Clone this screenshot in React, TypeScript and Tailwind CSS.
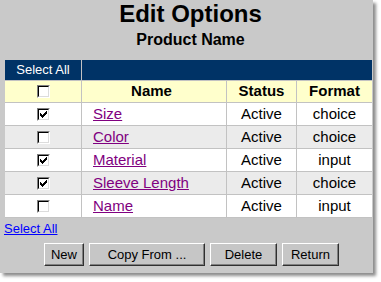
import React from "react";

type Row = { name: string; checked: boolean; status: string; format: string };

const rows: Row[] = [
  { name: "Size", checked: true, status: "Active", format: "choice" },
  { name: "Color", checked: false, status: "Active", format: "choice" },
  { name: "Material", checked: true, status: "Active", format: "input" },
  { name: "Sleeve Length", checked: true, status: "Active", format: "choice" },
  { name: "Name", checked: false, status: "Active", format: "input" },
];

// classic 7x7 check glyph, one rect per pixel run
const checkPixels: [number, number, number][] = [
  [6, 0, 1],
  [5, 1, 2],
  [0, 2, 1],
  [4, 2, 3],
  [0, 3, 2],
  [3, 3, 3],
  [0, 4, 5],
  [1, 5, 3],
  [2, 6, 1],
];

function Checkbox({ checked }: { checked: boolean }) {
  return (
    <span className="inline-block h-[13px] w-[13px] border-l border-t border-b border-r border-l-[#808080] border-t-[#808080] border-r-white border-b-white">
      <span className="flex h-[11px] w-[11px] items-center justify-center border border-l-black border-t-black border-r-[#dcdcdc] border-b-[#dcdcdc] bg-white">
        {checked && (
          <svg width="7" height="7" viewBox="0 0 7 7" shapeRendering="crispEdges">
            {checkPixels.map(([x, y, w], i) => (
              <rect key={i} x={x} y={y} width={w} height={1} fill="#000" />
            ))}
          </svg>
        )}
      </span>
    </span>
  );
}

function Button({ label, width }: { label: string; width: string }) {
  return (
    <button
      className={`h-[23px] ${width} border border-l-white border-t-white border-r-[#303030] border-b-[#303030] bg-[#c6c6c6] text-[13px] leading-none text-black shadow-[inset_-1px_-1px_0_#808080]`}
    >
      {label}
    </button>
  );
}

export default function App() {
  return (
    <div className="h-[282px] w-[381px] bg-white font-['Liberation_Sans',Arial,sans-serif] text-black">
      <div className="flex h-[273px] w-[373px] flex-col bg-[#c9c9c9] shadow-[3px_3px_3px_rgba(0,0,0,0.45)]">
        <h1 className="pl-[8px] text-center text-[24px] font-bold leading-[28px]">Edit Options</h1>
        <h2 className="mt-[2px] pl-[8px] text-center text-[16px] font-bold leading-[20px]">Product Name</h2>

        <div className="ml-[5px] mt-[10px] grid w-[367px] grid-cols-[76px_144px_69px_75px] grid-rows-[20px_21px_22px_22px_22px_22px_22px] gap-px bg-[#c2c2c2] pb-px">
          <div className="flex items-center justify-center bg-[#003366] text-[13px] text-white">Select All</div>
          <div className="col-span-3 bg-[#003366]" />

          <div className="flex items-center justify-center bg-[#ffffcc]">
            <Checkbox checked={false} />
          </div>
          <div className="flex items-center justify-center bg-[#ffffcc] pr-[5px] text-[15px] font-bold">Name</div>
          <div className="flex items-center justify-center bg-[#ffffcc] text-[15px] font-bold">Status</div>
          <div className="flex items-center justify-center bg-[#ffffcc] text-[15px] font-bold">Format</div>

          {rows.map((row, i) => {
            const bg = i % 2 === 1 ? "bg-[#ebebeb]" : "bg-white";
            return (
              <React.Fragment key={row.name}>
                <div className={`flex items-center justify-center ${bg}`}>
                  <Checkbox checked={row.checked} />
                </div>
                <div className={`flex items-center pl-[11px] ${bg}`}>
                  <a href="#" className="text-[15px] text-[#800080] underline">
                    {row.name}
                  </a>
                </div>
                <div className={`flex items-center justify-center text-[15px] ${bg}`}>{row.status}</div>
                <div className={`flex items-center justify-center text-[15px] ${bg}`}>{row.format}</div>
              </React.Fragment>
            );
          })}
        </div>

        <div className="ml-[4px] mt-[2px] leading-[16px]">
          <a href="#" className="text-[13px] text-[#0000ff] underline">
            Select All
          </a>
        </div>

        <div className="mt-[6px] flex justify-center gap-[5px] pl-[10px]">
          <Button label="New" width="w-[40px]" />
          <Button label="Copy From ..." width="w-[116px]" />
          <Button label="Delete" width="w-[67px]" />
          <Button label="Return" width="w-[57px]" />
        </div>
      </div>
    </div>
  );
}
